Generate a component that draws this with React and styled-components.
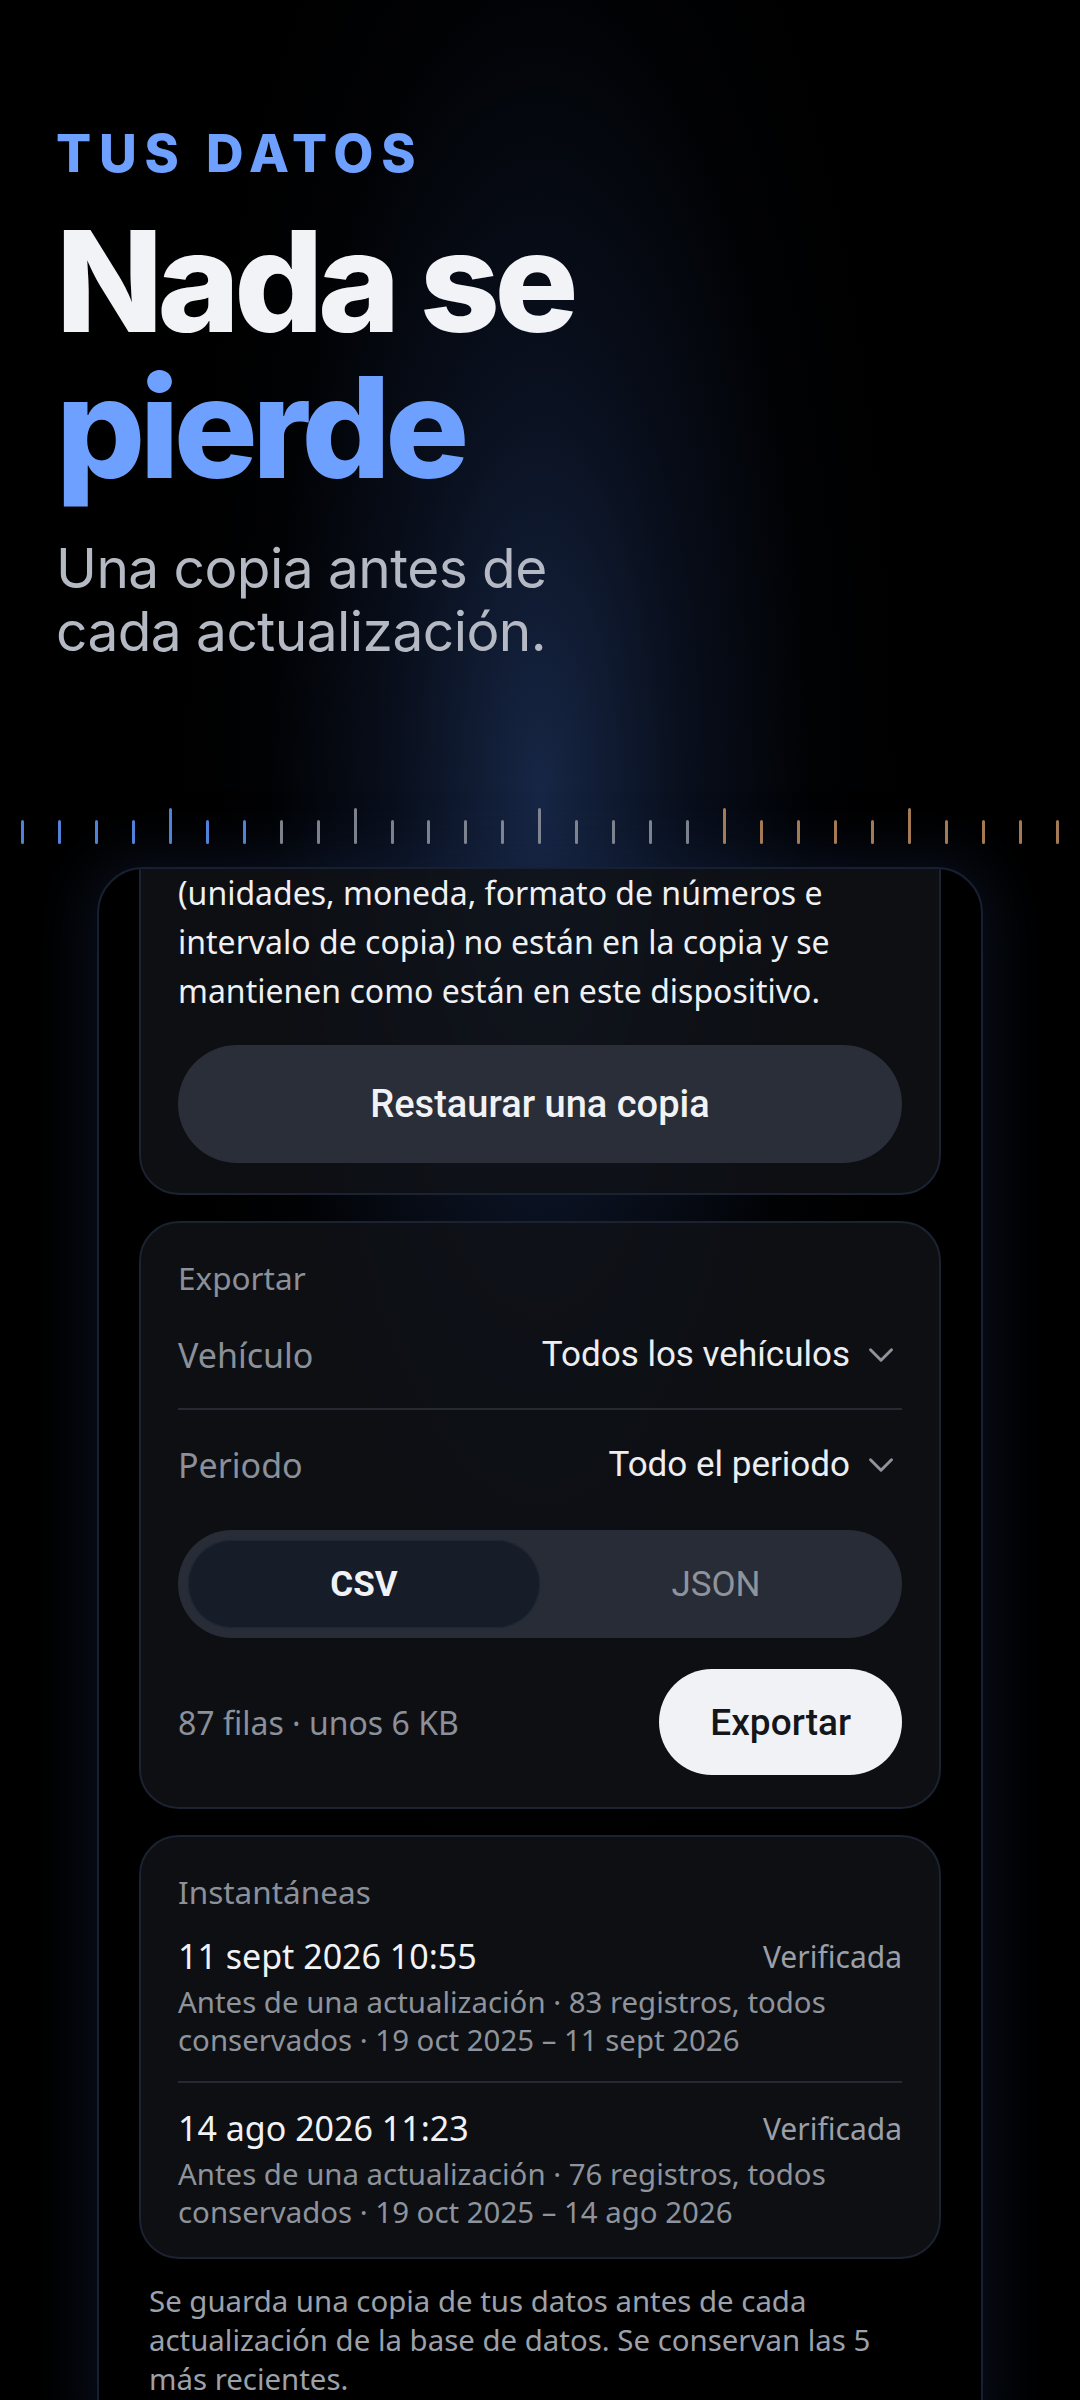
import React from 'react';
import styled, { createGlobalStyle } from 'styled-components';
import { ChevronDown } from 'lucide-react';

const GlobalStyle = createGlobalStyle`
  html, body {
    margin: 0;
    padding: 0;
    background: #000;
    overflow: hidden;
  }
  * { box-sizing: border-box; }
`;

const Page = styled.div`
  width: 1080px;
  height: 2400px;
  overflow: hidden;
  background:
    radial-gradient(ellipse 360px 1100px at 540px 800px, rgba(38, 64, 116, 0.6) 0%, rgba(26, 44, 84, 0.34) 40%, rgba(10, 18, 36, 0.12) 75%, rgba(0, 0, 0, 0) 100%),
    #000;
  font-family: 'Noto Sans', 'Liberation Sans', sans-serif;
  color: #eceef2;
`;

const Hero = styled.header`
  padding: 126px 56px 0;
  font-family: Inter, 'Liberation Sans', sans-serif;
`;

const Eyebrow = styled.div`
  font-size: 52px;
  font-weight: 800;
  letter-spacing: 0.15em;
  color: #6ea0ff;
  line-height: 56px;
`;

const Title = styled.h1`
  margin: 26px 0 0;
  font-size: 140px;
  font-weight: 800;
  letter-spacing: -0.04em;
  line-height: 146px;
  color: #f2f3f7;
`;

const Accent = styled.span`
  color: #6ea0ff;
`;

const Subtitle = styled.p`
  margin: 37px 0 0;
  font-size: 55px;
  font-weight: 400;
  line-height: 63px;
  color: #b4b9c3;
  letter-spacing: -0.01em;
`;

const Ruler = styled.div`
  margin-top: 145px;
  height: 36px;
  padding: 0 21px;
  display: flex;
  justify-content: space-between;
  align-items: flex-end;
`;

const Tick = styled.span`
  width: 3px;
  height: ${p => (p.$tall ? 36 : 24)}px;
  border-radius: 2px;
  background: ${p => p.$color};
  opacity: 0.9;
`;

const Panel = styled.section`
  margin: 23px auto 0;
  width: 886px;
  height: 1600px;
  border: 2px solid #162032;
  border-radius: 46px;
  overflow: hidden;
  box-shadow: 0 0 60px 10px rgba(22, 36, 66, 0.45);
  padding: 0 40px;
  display: flex;
  flex-direction: column;
`;

const Card = styled.div`
  border: 2px solid #1b2231;
  border-radius: 40px;
  background: rgba(16, 18, 23, 0.84);
  padding: ${p => p.$pad || '36px 37px'};
  margin-top: ${p => p.$top || '26px'};
  display: flex;
  flex-direction: column;
`;

const Body = styled.p`
  margin: 0;
  font-size: 32px;
  line-height: 49px;
  color: #eef0f4;
`;

const Pill = styled.button`
  border: none;
  border-radius: 999px;
  height: ${p => p.$h || 118}px;
  background: ${p => (p.$light ? '#f1f2f6' : '#292e38')};
  color: ${p => (p.$light ? '#14161b' : '#f1f2f6')};
  font-family: Roboto, 'Liberation Sans', sans-serif;
  font-weight: 500;
  font-size: ${p => p.$size || 38}px;
  padding: 0 ${p => (p.$light ? 51 : 40)}px;
  margin-top: ${p => p.$top || 0}px;
  display: flex;
  align-items: center;
  justify-content: center;
`;

const Label = styled.div`
  font-size: 31.5px;
  line-height: 38px;
  color: #8b909a;
`;

const Row = styled.div`
  height: ${p => p.$h || 109}px;
  margin-top: ${p => p.$top || 0}px;
  display: flex;
  align-items: center;
  justify-content: space-between;
  border-bottom: ${p => (p.$line ? '2px solid #262a33' : 'none')};
`;

const RowLabel = styled.span`
  font-size: 34px;
  color: #8b909a;
`;

const Select = styled.span`
  display: flex;
  align-items: center;
  gap: 10px;
  font-family: Roboto, 'Liberation Sans', sans-serif;
  font-size: 35px;
  color: #eceef2;
`;

const Segmented = styled.div`
  margin-top: 11px;
  height: 108px;
  border-radius: 999px;
  background: #282c36;
  padding: 10px;
  display: grid;
  grid-template-columns: 1fr 1fr;
`;

const Segment = styled.div`
  border-radius: 999px;
  display: flex;
  align-items: center;
  justify-content: center;
  line-height: 1;
  font-family: Roboto, 'Liberation Sans', sans-serif;
  font-size: 35px;
  font-weight: ${p => (p.$active ? 700 : 400)};
  color: ${p => (p.$active ? '#f1f2f6' : '#8e939c')};
  background: ${p => (p.$active ? '#161c28' : 'transparent')};
  box-shadow: ${p => (p.$active ? 'inset 0 0 0 1px #1f2736' : 'none')};
`;

const Footer = styled.div`
  margin-top: 31px;
  display: flex;
  align-items: center;
  justify-content: space-between;
`;

const Meta = styled.span`
  font-size: 32px;
  color: #8b909a;
`;

const Entry = styled.div`
  padding: 22px 0;
  border-bottom: ${p => (p.$line ? '2px solid #262a33' : 'none')};
`;

const EntryHead = styled.div`
  display: flex;
  justify-content: space-between;
  align-items: center;
  height: 46px;
  margin-bottom: 4px;
`;

const Stamp = styled.span`
  font-size: 34px;
  color: #f1f2f6;
`;

const Badge = styled.span`
  font-size: 30px;
  color: #9a9fa8;
`;

const Desc = styled.div`
  font-size: 29.4px;
  line-height: 38px;
  color: #8e939c;
`;

const Note = styled.p`
  margin: 23px 0 0;
  padding: 0 50px 0 10px;
  font-size: 29.4px;
  line-height: 39px;
  color: #9ca1aa;
`;

const tickColor = i => (i < 7 ? '#5b8fef' : i < 19 ? '#8a8f99' : '#b5875c');

const snapshots = [
  {
    when: '11 sept 2026 10:55',
    desc: 'Antes de una actualización · 83 registros, todos conservados · 19 oct 2025 – 11 sept 2026',
  },
  {
    when: '14 ago 2026 11:23',
    desc: 'Antes de una actualización · 76 registros, todos conservados · 19 oct 2025 – 14 ago 2026',
  },
];

export default function App() {
  return (
    <Page>
      <GlobalStyle />
      <Hero>
        <Eyebrow>TUS DATOS</Eyebrow>
        <Title>
          Nada se
          <br />
          <Accent>pierde</Accent>
        </Title>
        <Subtitle>
          Una copia antes de
          <br />
          cada actualización.
        </Subtitle>
      </Hero>

      <Ruler>
        {Array.from({ length: 29 }).map((_, i) => (
          <Tick key={i} $tall={i % 5 === 4} $color={tickColor(i)} />
        ))}
      </Ruler>

      <Panel>
        <Card $top="-40px" $pad="37px 37px 30px">
          <Body>
            (unidades, moneda, formato de números e intervalo de copia) no están en la copia y se mantienen como están en este dispositivo.
          </Body>
          <Pill $top={30}>Restaurar una copia</Pill>
        </Card>

        <Card $pad="36px 37px 32px">
          <Label>Exportar</Label>
          <Row $line $top={4}>
            <RowLabel>Vehículo</RowLabel>
            <Select>
              Todos los vehículos
              <ChevronDown size={42} strokeWidth={1.7} color="#8e939c" />
            </Select>
          </Row>
          <Row>
            <RowLabel>Periodo</RowLabel>
            <Select>
              Todo el periodo
              <ChevronDown size={42} strokeWidth={1.7} color="#8e939c" />
            </Select>
          </Row>
          <Segmented>
            <Segment $active>CSV</Segment>
            <Segment>JSON</Segment>
          </Segmented>
          <Footer>
            <Meta>87 filas · unos 6 KB</Meta>
            <Pill $light $h={106} $size={37}>Exportar</Pill>
          </Footer>
        </Card>

        <Card $pad="36px 37px 4px">
          <Label>Instantáneas</Label>
          {snapshots.map((s, i) => (
            <Entry key={s.when} $line={i < snapshots.length - 1}>
              <EntryHead>
                <Stamp>{s.when}</Stamp>
                <Badge>Verificada</Badge>
              </EntryHead>
              <Desc>{s.desc}</Desc>
            </Entry>
          ))}
        </Card>

        <Note>
          Se guarda una copia de tus datos antes de cada actualización de la base de datos. Se conservan las 5 más recientes.
        </Note>
      </Panel>
    </Page>
  );
}
